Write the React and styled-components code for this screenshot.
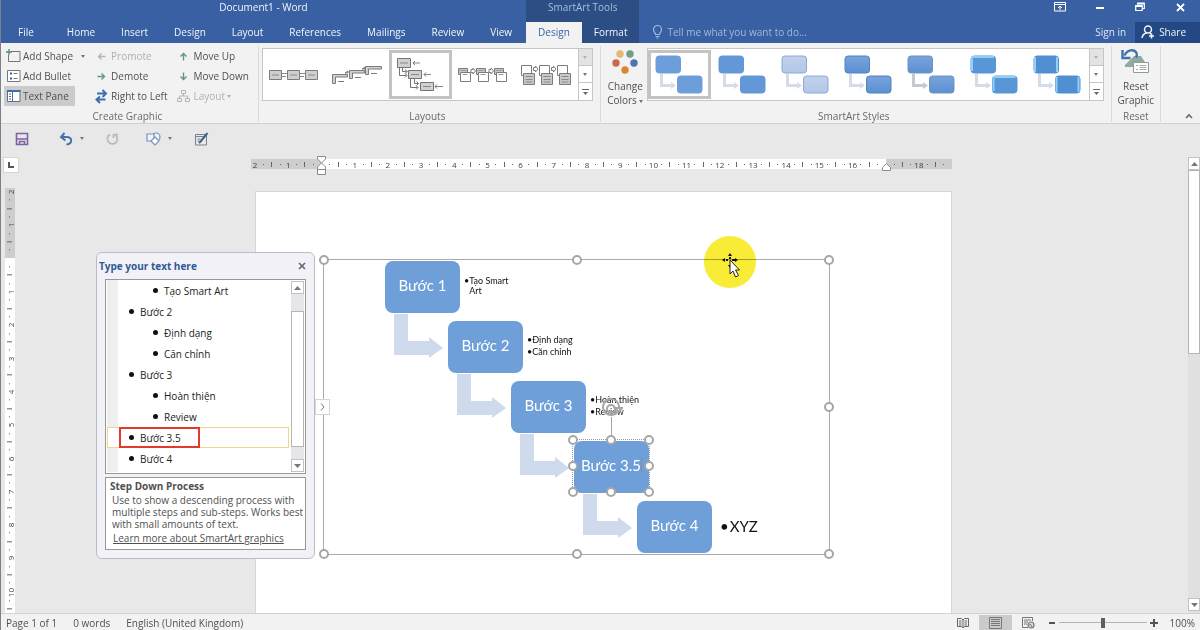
import React, { useState } from 'react';
import styled, { createGlobalStyle, css } from 'styled-components';

const colors = {
  brand: '#3860a2',
  brandDark: '#2c4e85',
  share: '#244883',
  ribbon: '#f2f2f2',
  canvas: '#e8e8e8',
  line: '#d2d2d2',
  text: '#505050',
  muted: '#b0b0b0',
  shape: '#6f9fd8',
  arrow: '#cfdaec',
};

const GlobalStyle = createGlobalStyle`
  * { box-sizing: border-box; }
  body {
    margin: 0;
    font-family: "Open Sans", "Noto Sans", sans-serif;
    font-size: 10px;
    color: ${colors.text};
  }
  button, input { font: inherit; color: inherit; }
  button { padding: 0; border: 0; background: none; cursor: pointer; white-space: nowrap; }
  svg { display: block; flex: none; }
`;

const Window = styled.div`
  display: flex;
  flex-direction: column;
  height: 100vh;
  min-height: 400px;
  overflow: hidden;
  border-left: 1px solid #7d8087;
  background: ${colors.canvas};
`;

/* ---------- title bar and tabs ---------- */

const Header = styled.header`
  display: flex;
  flex: none;
  background: ${colors.brand};
  color: #e9eef6;
`;

const HeaderPart = styled.div`
  display: flex;
  flex-direction: column;
  flex: ${props => (props.$grow ? 1 : 'none')};
  background: ${props => (props.$context ? colors.brandDark : 'transparent')};
`;

const TitleRow = styled.div`
  display: flex;
  align-items: center;
  justify-content: ${props => (props.$end ? 'flex-end' : 'center')};
  height: 22px;
  padding-bottom: 8px;
  color: ${props => (props.$context ? '#a9bddd' : '#f2f5fa')};
`;

const TabRow = styled.nav`
  display: flex;
  align-items: stretch;
  height: 21px;
`;

const Tab = styled.button`
  padding: 0 ${props => (props.$file ? '21px 2px 17px' : '12px 2px')};
  margin-right: ${props => (props.$file ? '0' : '2px')};
  background: ${props => (props.$active ? colors.ribbon : 'transparent')};
  color: ${props => (props.$active ? '#3c62a4' : '#f2f5fa')};
`;

const ContextTab = styled(Tab)`
  flex: 1;
  margin: 0;
`;

const WindowButton = styled.button`
  display: flex;
  align-items: center;
  justify-content: center;
  width: 40px;
  height: 14px;
  color: #fff;
`;

const TellMe = styled.label`
  display: flex;
  align-items: center;
  flex: 1;
  gap: 4px;
  padding: 0 0 2px 13px;
  color: #a4b8da;
`;

const TellMeInput = styled.input`
  flex: 1;
  min-width: 0;
  padding: 0;
  border: 0;
  outline: 0;
  background: none;
  &::placeholder { color: #a4b8da; opacity: 1; }
`;

const SignIn = styled.button`
  padding: 0 9px 2px;
  color: #e0e7f3;
`;

const Share = styled.button`
  display: flex;
  align-items: center;
  gap: 4px;
  padding: 0 14px 2px 6px;
  background: ${colors.share};
  color: #f2f5fa;
`;

/* ---------- ribbon ---------- */

const Ribbon = styled.section`
  display: flex;
  flex: none;
  height: 81px;
  background: ${colors.ribbon};
  border-bottom: 1px solid ${colors.line};
`;

const Group = styled.div`
  display: flex;
  flex-direction: column;
  justify-content: space-between;
  margin: 3px 0 1px;
  padding: ${props => props.$pad || '0 7px 0 3px'};
  border-right: 1px solid #dadada;
`;

const GroupBody = styled.div`
  display: flex;
  gap: ${props => props.$gap || '0'};
`;

const GroupName = styled.div`
  line-height: 12px;
  text-align: center;
  color: #6a6a6a;
`;

const CommandColumn = styled.div`
  display: flex;
  flex-direction: column;
  align-items: flex-start;
`;

const Command = styled.button`
  display: flex;
  align-items: center;
  gap: 2px;
  height: 20px;
  padding: 0 ${props => (props.$wide ? '6px' : '2px')} 0 2px;
  background: ${props => (props.$pressed ? '#cbcbcb' : 'transparent')};
  color: ${props => (props.disabled ? colors.muted : colors.text)};
`;

const Caret = styled.span`
  margin-left: ${props => props.$gap || '0'};
  border: 2px solid transparent;
  border-top: 3px solid ${props => (props.$faint ? colors.muted : '#777')};
  border-bottom: 0;
`;

const InlineCaret = styled(Caret)`
  display: inline-block;
  vertical-align: middle;
`;

const Gallery = styled.div`
  display: flex;
  height: 53px;
  margin-top: 2px;
  background: #fff;
  border: 1px solid #c6c6c6;
`;

const GalleryItem = styled.button`
  display: flex;
  align-items: center;
  justify-content: center;
  width: 63px;
  height: ${props => (props.$selected ? '49px' : 'auto')};
  margin-top: ${props => (props.$selected ? '1px' : '0')};
  border: 3px solid ${props => (props.$selected ? '#c3c3c3' : 'transparent')};
`;

const GalleryScroll = styled.div`
  display: grid;
  grid-template-rows: repeat(3, 1fr);
  width: 14px;
  border-left: 1px solid #c6c6c6;
`;

const ScrollStep = styled.button`
  display: flex;
  flex-direction: column;
  align-items: center;
  justify-content: center;
  gap: 2px;
  background: ${props => (props.disabled ? '#e3e3e3' : '#fff')};
  &:not(:last-child) { border-bottom: 1px solid #c6c6c6; }
`;

const BigButton = styled.button`
  display: flex;
  flex-direction: column;
  align-items: center;
  gap: 5px;
  width: ${props => props.$width};
  padding-top: ${props => props.$top || '4px'};
  line-height: 14px;
`;

const BigButtonCaption = styled.span`
  white-space: normal;
`;

const Collapse = styled.button`
  display: flex;
  align-items: flex-end;
  justify-content: flex-end;
  flex: 1;
  padding: 0 7px 4px 0;
`;

/* ---------- quick access ---------- */

const QuickAccess = styled.div`
  display: flex;
  align-items: center;
  flex: none;
  gap: 22px;
  height: 31px;
  padding: 0 0 2px 14px;
`;

const QuickButton = styled.button`
  display: flex;
  align-items: center;
  gap: 7px;
  width: ${props => props.$width || 'auto'};
`;

/* ---------- workspace ---------- */

const Workspace = styled.main`
  display: grid;
  grid-template-columns: 18px minmax(0, 1fr) 12px;
  grid-template-rows: 33px minmax(0, 1fr);
  flex: 1;
  min-height: 0;
`;

const TabStop = styled.button`
  display: flex;
  align-items: center;
  justify-content: center;
  width: 16px;
  height: 16px;
  margin: 2px 0 0 2px;
  background: #fff;
  border: 1px solid #d5d5d5;
`;

const RulerRow = styled.div`
  display: flex;
  justify-content: center;
  padding-right: 4px;
`;

const Ruler = styled.div`
  position: relative;
  display: flex;
  width: 701px;
  height: 10px;
  margin-top: 4px;
  padding-right: 4px;
  background: linear-gradient(to right, #cdcdcd 70px, #fff 70px, #fff 635px, #cdcdcd 635px);
  font-size: 8px;
  color: #3f3f3f;
`;

const VerticalRuler = styled.div`
  display: flex;
  flex-direction: column;
  width: 10px;
  min-height: 0;
  margin-left: 4px;
  overflow: hidden;
  background: linear-gradient(#cdcdcd 70px, #fff 70px);
  font-size: 8px;
  color: #3f3f3f;
`;

const Quarter = styled.span`
  display: flex;
  align-items: center;
  justify-content: center;
  flex: 1;
  min-width: 0;
  white-space: nowrap;
  ${props => props.$vertical && css`
    flex: 0 0 calc(100% / 51);
    writing-mode: vertical-rl;
    transform: rotate(180deg);
  `}
`;

const Tick = styled.i`
  width: ${props => (props.$vertical && props.$long ? '5px' : '1px')};
  height: ${props => (!props.$vertical && props.$long ? '5px' : '1px')};
  background: #666;
`;

const IndentMarker = styled.svg`
  position: absolute;
  top: ${props => props.$top};
  left: ${props => props.$left};
`;

const DocumentArea = styled.div`
  display: flex;
  justify-content: center;
  min-height: 0;
  padding-top: 3px;
`;

const Paper = styled.article`
  position: relative;
  width: 697px;
  background: #fff;
  border: 1px solid #d6d6d6;
  border-bottom: 0;
`;

const ScrollBar = styled.div`
  display: flex;
  flex-direction: column;
  grid-column: 3;
  grid-row: 1 / 3;
  margin-top: 2px;
  padding-bottom: 2px;
  background: #e0e0e0;
`;

const ScrollArrow = styled.button`
  display: flex;
  align-items: center;
  justify-content: center;
  flex: none;
  height: 13px;
  background: #fff;
  border: 1px solid #c2c2c2;
`;

const ScrollTrack = styled.div`
  flex: 1;
  padding-top: ${props => props.$top || '0'};
`;

const ScrollThumb = styled.div`
  height: ${props => props.$height};
  background: #fff;
  border: 1px solid #b5b5b5;
`;

/* ---------- SmartArt ---------- */

const ArtFrame = styled.div`
  position: absolute;
  top: 67px;
  left: 67px;
  width: 507px;
  height: 296px;
  border: 1px solid #a9a9a9;
  font-family: Lato, "Open Sans", sans-serif;
`;

const Step = styled.div`
  position: absolute;
  top: ${props => props.$y}px;
  left: ${props => props.$x}px;
  display: flex;
  align-items: center;
  justify-content: center;
  width: 75px;
  height: 52px;
  padding-bottom: 4px;
  border-radius: 8px;
  background: ${colors.shape};
  color: #fff;
  font-size: 15px;
  white-space: nowrap;
`;

const StepArrow = styled.svg`
  position: absolute;
  top: ${props => props.$y}px;
  left: ${props => props.$x}px;
`;

const Notes = styled.ul`
  position: absolute;
  top: ${props => props.$y}px;
  left: ${props => props.$x}px;
  display: flex;
  flex-direction: column;
  justify-content: center;
  gap: ${props => (props.$large ? '0' : '2px')};
  width: 52px;
  height: 52px;
  margin: 0;
  padding: 0 0 2px;
  list-style: none;
  color: #111;
  font-size: ${props => (props.$large ? '15px' : '9px')};
  line-height: ${props => (props.$large ? '18px' : '10px')};
`;

const Note = styled.li`
  display: flex;
  gap: ${props => (props.$large ? '1px' : '0')};
  white-space: ${props => (props.$wrap ? 'normal' : 'nowrap')};
`;

const Selection = styled.div`
  position: absolute;
  top: 179px;
  left: 248px;
  width: 78px;
  height: 54px;
  border: 1px dotted #8d9bb0;
`;

const Handle = styled.span`
  position: absolute;
  top: ${props => props.$top};
  left: ${props => props.$left};
  width: 10px;
  height: 10px;
  margin: -5px 0 0 -5px;
  border: 2px solid #a6a6a6;
  border-radius: 50%;
  background: #fff;
`;

const TextCursor = styled.i`
  width: 1px;
  height: 16px;
  background: #7f8ea5;
`;

const RotateHandle = styled.svg`
  position: absolute;
  top: -42px;
  left: 28px;
`;

const PaneToggle = styled.button`
  position: absolute;
  top: 139px;
  left: -9px;
  display: flex;
  align-items: center;
  justify-content: center;
  width: 15px;
  height: 16px;
  background: #fff;
  border: 1px solid #d5d5d5;
`;

const Spotlight = styled.span`
  position: absolute;
  top: -24px;
  left: 380px;
  width: 52px;
  height: 52px;
  border-radius: 50%;
  background: #f8ec36;
  mix-blend-mode: multiply;
`;

const Pointer = styled.svg`
  position: absolute;
  top: -7px;
  left: 398px;
`;

/* ---------- text pane ---------- */

const TextPane = styled.aside`
  position: absolute;
  top: 60px;
  left: -160px;
  width: 219px;
  padding: 0 8px 8px;
  border: 1px solid #bcbcc6;
  border-radius: 6px;
  background: #f1f1f7;
`;

const PaneHeader = styled.header`
  display: flex;
  align-items: center;
  justify-content: space-between;
  height: 26px;
  margin-left: -6px;
`;

const PaneTitle = styled.h2`
  margin: 0;
  font-size: 10px;
  font-weight: 700;
  color: #2f5a96;
`;

const PaneList = styled.div`
  display: flex;
  height: 195px;
  padding: 0 1px 1px;
  border: 1px solid #989898;
  background: #fff;
`;

const Outline = styled.ul`
  flex: 1;
  min-width: 0;
  margin: 0;
  padding: 0;
  list-style: none;
  background: linear-gradient(to right, #efefef 11px, #fff 11px);
  color: #222;
`;

const OutlineItem = styled.li`
  display: flex;
  align-items: center;
  height: 21px;
  padding-left: ${props => (props.$level === 2 ? '36px' : '12px')};
  ${props => props.$current && css`
    padding-left: 11px;
    background: #fff;
    border: 1px solid #f3d48a;
  `}
`;

const OutlineText = styled.span`
  display: flex;
  align-items: center;
  gap: 6px;
  height: 21px;
  padding: 0 17px 0 10px;
  ${props => props.$marked && css`
    padding: 0 17px 0 8px;
    border: 2px solid #e23a2c;
  `}
`;

const Dot = styled.i`
  width: 5px;
  height: 5px;
  border-radius: 50%;
  background: #111;
`;

const PaneScroll = styled.div`
  display: flex;
  flex-direction: column;
  width: 13px;
  margin: 1px 0 0 2px;
  background: #e6e6ea;
`;

const PaneInfo = styled.section`
  height: 73px;
  margin-top: 3px;
  padding: 2px 4px 0;
  border: 1px solid #989898;
  background: #fff;
  line-height: 12px;
`;

const InfoTitle = styled.h3`
  margin: 0 0 2px;
  font-size: 10px;
  font-weight: 700;
  line-height: 12px;
`;

const InfoText = styled.p`
  margin: 0 -4px 2px 2px;
`;

const InfoLink = styled.a`
  margin-left: 3px;
  color: ${colors.text};
`;

/* ---------- status bar ---------- */

const StatusBar = styled.footer`
  display: flex;
  align-items: center;
  flex: none;
  height: 17px;
  padding: 1px 0 0 5px;
  background: ${colors.ribbon};
  border-top: 1px solid ${colors.line};
`;

const StatusItem = styled.span`
  margin-right: 16px;
`;

const ViewButton = styled.button`
  display: flex;
  align-items: center;
  justify-content: center;
  width: 33px;
  height: 16px;
  background: ${props => (props.$active ? '#cbcbcb' : 'transparent')};
`;

const Views = styled.div`
  display: flex;
  margin-left: auto;
`;

const ZoomStep = styled.button`
  display: flex;
  align-items: center;
  justify-content: center;
  width: 14px;
  height: 14px;
`;

const ZoomRange = styled.input`
  width: 88px;
  height: 12px;
  margin: 0;
  appearance: none;
  background: linear-gradient(#b4b4b4, #b4b4b4) center / 100% 1px no-repeat;
  &::-webkit-slider-thumb {
    appearance: none;
    width: 4px;
    height: 10px;
    background: #5f5f5f;
  }
`;

const ZoomValue = styled.output`
  width: 39px;
  padding-right: 5px;
  text-align: right;
`;

/* ---------- icons ---------- */

const Arrow = ({ dir, color = '#5f9780' }) => (
  <svg width="15" height="11" viewBox="-2 0 15 11" fill="none" stroke={color} strokeWidth="1.4">
    <g transform={`rotate(${{ right: 0, down: 90, left: 180, up: 270 }[dir]} 5.5 5.5)`}>
      <path d="M1.5 5.5h7M5.500 2.500l3 3-3 3" />
    </g>
  </svg>
);

const AddShapeIcon = () => (
  <svg width="15" height="14" viewBox="0 0 15 14" fill="none">
    <path d="M5 2.5h9v10H2.500V6" stroke="#777" />
    <path d="M3 0v6M0 3h6" stroke="#4f8a6d" strokeWidth="1.300" />
  </svg>
);

const AddBulletIcon = () => (
  <svg width="15" height="14" viewBox="0 0 15 14" fill="none">
    <path d="M1.500 1.500h12.500v11H1.500z" fill="#fff" stroke="#777" />
    <path d="M4 4.500h2M4 9.500h2" stroke="#35639f" strokeWidth="2" />
    <path d="M7.500 4.500h4M7.500 9.500h4" stroke="#777" />
  </svg>
);

const TextPaneIcon = () => (
  <svg width="15" height="14" viewBox="0 0 15 14" fill="none">
    <path d="M1.500 1.500h12.500v11H1.500z" fill="#fff" stroke="#5b6f8c" />
    <path d="M1 2h13.500" stroke="#3b6cad" strokeWidth="2" />
    <path d="M6.500 3v9" stroke="#5b6f8c" />
    <path d="M3 5h2M3 7.500h2M3 10h2" stroke="#3b6cad" />
  </svg>
);

const SwapIcon = () => (
  <svg width="15" height="15" viewBox="0 0 15 15" fill="none" stroke="#3e6db0" strokeWidth="2">
    <path d="M3 4.500h9M8.500 1l3.500 3.500L8.500 8" />
    <path d="M11.500 10.500H3M6 7.500l-3.500 3 3.500 3.500" />
  </svg>
);

const OrgIcon = () => (
  <svg width="15" height="14" viewBox="0 0 15 14" fill="none" stroke="#b5b5b5">
    <path d="M5.500 1.500h4v3h-4zM1.500 9.500h4v3h-4zM9.500 9.500h4v3h-4zM7.500 4.500V7M3.500 9.500V7h8v2.500" />
  </svg>
);

const LayoutBasic = () => (
  <svg width="50" height="14" viewBox="0 0 50 14" fill="#cfcfcf" stroke="#7c7c7c">
    <path d="M.5 2.500h12v9H.5zM18.500 2.500h12v9h-12zM36.500 2.500h12v9h-12z" />
    <path d="M3 7h7M21 7h7M39 7h7M13 5.500h5M13 8.500h4M31 5.500h5M31 8.500h4" stroke="#888" />
  </svg>
);

const LayoutRise = () => (
  <svg width="50" height="20" viewBox="0 0 50 20" fill="#d0d0d0" stroke="#7c7c7c">
    <path d="M.5 18.500v-9h15v2.500h-12v6.500zM17.500 13.500v-8h15v2.500h-12v5.500zM33.500 9.500v-8h16v2.500h-13v5.500z" />
    <path d="M6 16.500h6M23 12.500h6M39 8.500h6M13 8l3-2v2zM30 4l3-2v2z" />
  </svg>
);

const LayoutStepDown = () => (
  <svg width="48" height="36" viewBox="0 0 48 36" fill="none" stroke="#747474">
    <path d="M1.500 1.500h13v9h-13zM12.500 13.500h13v8h-13zM24.500 25.500h13v8h-13z" fill="#d0d0d0" />
    <path d="M4 6h8M15 17.500h8M27 29.500h8M17 6h7M28 17.500h7M39 29.500h8" stroke="#888" />
    <path d="M3.500 10.500v8h7M6.500 10.500v4h4M14.500 21.500v9h7M18.500 21.500v5h4" />
    <path d="M9 12.500l2.500 2L9 16.500M9 16.500l2 2-2 2M20 28.500l2 2-2 2M20.500 24.500l2 2-2 2M19 4l-2 2 2 2M30 15.500l-2 2 2 2M41 27.500l-2 2 2 2" />
  </svg>
);

const LayoutAccent = () => (
  <svg width="50" height="16" viewBox="0 0 50 16" stroke="#7c7c7c">
    {[0, 18, 36].map(x => (
      <g key={x} transform={`translate(${x} 0)`}>
        <path d="M.5 1.500h9v6h-9z" fill="#c8c8c8" />
        <path d="M2.500 5.500h10v9h-10z" fill="#fff" />
        <path d="M1.500 3.500h7M4.500 7.500h5" stroke="#999" />
        {x < 36 && <path d="M15 2.500h-2v3h2v1.500l2.500-3L15 1z" fill="#fff" />}
      </g>
    ))}
  </svg>
);

const LayoutProcess = () => (
  <svg width="51" height="22" viewBox="0 0 51 22" stroke="#7c7c7c">
    {[0, 18, 36].map(x => (
      <g key={x} transform={`translate(${x} 0)`}>
        <path d="M.5 1.500h10v10H.5z" fill="#fff" />
        <path d="M2.500 9.500h11v11h-11z" fill="#c8c8c8" />
        <path d="M4.500 12.500h7M4.500 15.500h7M4.500 18h7" stroke="#8a8a8a" />
        {x < 36 && <path d="M14.500 3.500h-2v3h2V8l2.500-3-2.500-3z" fill="#fff" />}
      </g>
    ))}
  </svg>
);

const layouts = [LayoutBasic, LayoutRise, LayoutStepDown, LayoutAccent, LayoutProcess];

const styles = [
  { id: 'simple', fill: '#6c9edb' },
  { id: 'white', fill: '#6497d7' },
  { id: 'subtle', fill: '#b3c7e8', stroke: '#8ea9d4' },
  { id: 'moderate', fill: '#5b90d2', stroke: '#4f82c4' },
  { id: 'intense', fill: '#5b90d2', stroke: '#6f93c0', arrow: '#c5c9d2' },
  { id: 'polished', fill: '#5996d8', shine: 'top' },
  { id: 'inset', fill: '#4f8fd2', shine: 'side' },
];

const StyleThumb = ({ id, fill, stroke = fill, arrow = '#d5dbea', shine }) => (
  <svg width="48" height="42" viewBox="0 0 48 42">
    <defs>
      <linearGradient id={`fill-${id}`} x1="0" y1="0" x2="0" y2="1">
        <stop offset="0" stopColor={fill} stopOpacity={stroke === fill ? 1 : 0.82} />
        <stop offset="1" stopColor={fill} />
      </linearGradient>
    </defs>
    <path d="M6.500 20v11.500h11" fill="none" stroke={arrow} strokeWidth="3" />
    <path d="M16 28l5 3.500-5 3.500z" fill={arrow} />
    {[[1, 2], [22.5, 22]].map(([x, y]) => (
      <g key={x}>
        <rect x={x} y={y} width="24.500" height="17" rx="3" fill={`url(#fill-${id})`} stroke={stroke} />
        {shine === 'top' && <path d={`M${x + 1} ${y + 1}h22M${x + 1} ${y + 1}v14`} fill="none" stroke="#8fd0f5" strokeWidth="2" />}
        {shine === 'side' && <path d={`M${x + 1} ${y + 1}v15M${x + 23} ${y + 1}v15`} stroke="#8fd0f5" strokeWidth="2" />}
      </g>
    ))}
  </svg>
);

const ColorsIcon = () => (
  <svg width="26" height="24" viewBox="0 0 26 24">
    <circle cx="8" cy="4" r="3.700" fill="#e8b670" />
    <circle cx="18" cy="4" r="3.700" fill="#6f9f8b" />
    <circle cx="4" cy="13" r="3.700" fill="#cc6552" />
    <circle cx="22" cy="13" r="3.700" fill="#4e73ad" />
    <circle cx="13" cy="20" r="3.700" fill="#dd8531" />
  </svg>
);

const ResetIcon = () => (
  <svg width="30" height="26" viewBox="0 0 30 26" fill="none">
    <path d="M4 17 13 8h7l7 11H4z" fill="#8caa9d" />
    <path d="M3.500 7.500C6 1.500 13 .5 15.500 5c1 2 .5 3-.5 4.500" stroke="#4371ac" strokeWidth="2.400" />
    <path d="M1.500 2v8h8" stroke="#4371ac" strokeWidth="2.400" />
    <path d="M12.500 14.500h15v10h-15z" fill="#fff" stroke="#8f9c98" />
    <path d="M15 17.500h2M15 21.500h2M18.500 17.500h7M18.500 19.500h7M18.500 21.500h7" stroke="#a2adaa" />
  </svg>
);

const SaveIcon = () => (
  <svg width="14" height="14" viewBox="0 0 14 14" fill="none" stroke="#7e62a5" strokeWidth="1.600">
    <path d="M1.500 1.500h11v11h-11zM2 7h10M4.500 12.500v-3h5v3" />
  </svg>
);

const UndoIcon = () => (
  <svg width="14" height="14" viewBox="0 0 14 14" fill="none" stroke="#4470ac" strokeWidth="2">
    <path d="M5.500 1 2 5l4.500 3.500M2 5h5.500C14 5 13.500 12 7.500 12.500" />
  </svg>
);

const RedoIcon = () => (
  <svg width="13" height="14" viewBox="0 0 13 14" fill="none" stroke="#b9b9b9" strokeWidth="1.700">
    <path d="M4 2.500a5 5 0 1 0 5.500.5M7.500 6V2.500H12" />
  </svg>
);

const ShapesIcon = () => (
  <svg width="15" height="14" viewBox="0 0 15 14" fill="#eef2f8" stroke="#7794bd" strokeWidth="1.200">
    <circle cx="10" cy="5" r="4" />
    <path d="M1 2h7v7H1z" />
    <path d="m9 5 4 4-4 4-4-4z" fill="#fff" />
  </svg>
);

const EditIcon = () => (
  <svg width="15" height="14" viewBox="0 0 15 14" fill="none" stroke="#77828e">
    <path d="M1.500 2.500h11v10.500h-11zM1.500 4.500h11M3.500 7h3M3.500 9h2" />
    <path d="M13.500 1 7 9l-2 2" stroke="#3f658f" strokeWidth="2" />
  </svg>
);

const BulbIcon = () => (
  <svg width="11" height="14" viewBox="0 0 11 14" fill="none" stroke="currentColor" strokeWidth="1.200">
    <path d="M3.500 9.500c0-2-2-2.500-2-5a4 4 0 0 1 8 0c0 2.500-2 3-2 5zM3.500 11.500h4M4.500 13h2" />
  </svg>
);

const PersonIcon = () => (
  <svg width="14" height="14" viewBox="0 0 14 14" fill="none" stroke="currentColor" strokeWidth="1.500">
    <circle cx="7" cy="4.500" r="3.500" />
    <path d="M1 13c.5-3 2-4.500 4.500-5M9 8l2 2M10.500 8.500v5M8 11h5" />
  </svg>
);

const StepArrowShape = ({ x, y }) => (
  <StepArrow $x={x} $y={y} width="50" height="45" viewBox="0 0 50 45" fill={colors.arrow}>
    <path d="M0 0h14v27h21v-4l14 11-14 10v-3H0z" />
  </StepArrow>
);

const Up = () => (
  <svg width="7" height="4" viewBox="0 0 7 4" fill="#777"><path d="M0 4 3.500 0 7 4z" /></svg>
);

const Down = () => (
  <svg width="7" height="4" viewBox="0 0 7 4" fill="#777"><path d="M0 0h7L3.500 4z" /></svg>
);

/* ---------- data ---------- */

const tabs = ['File', 'Home', 'Insert', 'Design', 'Layout', 'References', 'Mailings', 'Review', 'View'];

const outline = [
  { text: 'Tạo Smart Art', level: 2 },
  { text: 'Bước 2', level: 1 },
  { text: 'Định dạng', level: 2 },
  { text: 'Căn chỉnh', level: 2 },
  { text: 'Bước 3', level: 1 },
  { text: 'Hoàn thiện', level: 2 },
  { text: 'Review', level: 2 },
  { text: 'Bước 3.5', level: 1, current: true },
  { text: 'Bước 4', level: 1 },
];

const steps = [
  { text: 'Bước 1', notes: ['Tạo Smart Art'], wrap: true },
  { text: 'Bước 2', notes: ['Định dạng', 'Căn chỉnh'] },
  { text: 'Bước 3', notes: ['Hoàn thiện', 'Review'] },
  { text: 'Bước 3.5', notes: [], editing: true },
  { text: 'Bước 4', notes: ['XYZ'], large: true },
];

const frameHandles = [
  ['0%', '0%'], ['0%', '50%'], ['0%', '100%'], ['50%', '100%'],
  ['100%', '0%'], ['100%', '50%'], ['100%', '100%'],
];

const RulerMarks = ({ count, hidden = [], vertical }) =>
  Array.from({ length: count }, (_, i) => {
    const unit = i / 4 - 2;
    if (i % 4 === 0) {
      return (
        <Quarter key={i} $vertical={vertical}>
          {hidden.includes(unit) ? '' : Math.abs(unit)}
        </Quarter>
      );
    }
    return (
      <Quarter key={i} $vertical={vertical}>
        <Tick $long={i % 4 === 2} $vertical={vertical} />
      </Quarter>
    );
  });

const GallerySteps = () => (
  <GalleryScroll>
    <ScrollStep disabled aria-label="Previous row"><Caret $faint /></ScrollStep>
    <ScrollStep aria-label="Next row"><Caret /></ScrollStep>
    <ScrollStep aria-label="More">
      <svg width="7" height="6" viewBox="0 0 7 6" fill="#666"><path d="M0 0h7v1H0zM1 3h5L3.500 6z" /></svg>
    </ScrollStep>
  </GalleryScroll>
);

const TitleBar = () => (
  <Header>
    <HeaderPart>
      <TitleRow>Document1 - Word</TitleRow>
      <TabRow>
        {tabs.map(name => <Tab key={name} $file={name === 'File'}>{name}</Tab>)}
      </TabRow>
    </HeaderPart>
    <HeaderPart $context>
      <TitleRow $context>SmartArt Tools</TitleRow>
      <TabRow>
        <ContextTab $active>Design</ContextTab>
        <ContextTab>Format</ContextTab>
      </TabRow>
    </HeaderPart>
    <HeaderPart $grow>
      <TitleRow $end>
        <WindowButton aria-label="Ribbon display options">
          <svg width="12" height="10" viewBox="0 0 12 10" fill="none" stroke="currentColor">
            <path d="M.5.5h11v8.500H.5zM.5 2.500h11M6 8V4M4 6l2-2 2 2" />
          </svg>
        </WindowButton>
        <WindowButton aria-label="Minimize">
          <svg width="8" height="8" viewBox="0 0 8 8" fill="currentColor"><path d="M0 4h8v2H0z" /></svg>
        </WindowButton>
        <WindowButton aria-label="Restore">
          <svg width="10" height="10" viewBox="0 0 10 10" fill="none" stroke="currentColor" strokeWidth="1.200">
            <path d="M.7 3.500h6.500v5H.7zM.7 4.500h6.500M2.700 3V1h6.600v5.500H7.500M2.700 2h6.600" />
          </svg>
        </WindowButton>
        <WindowButton aria-label="Close">
          <svg width="9" height="9" viewBox="0 0 9 9" stroke="currentColor" strokeWidth="1.800">
            <path d="m1 1 7 7M8 1 1 8" />
          </svg>
        </WindowButton>
      </TitleRow>
      <TabRow>
        <TellMe>
          <BulbIcon />
          <TellMeInput aria-label="Tell me" placeholder="Tell me what you want to do..." />
        </TellMe>
        <SignIn>Sign in</SignIn>
        <Share><PersonIcon />Share</Share>
      </TabRow>
    </HeaderPart>
  </Header>
);

const RibbonBar = () => (
  <Ribbon>
    <Group>
      <GroupBody $gap="5px">
        <CommandColumn>
          <Command><AddShapeIcon />Add Shape<Caret $gap="6px" /></Command>
          <Command><AddBulletIcon />Add Bullet</Command>
          <Command $pressed $wide><TextPaneIcon />Text Pane</Command>
        </CommandColumn>
        <CommandColumn>
          <Command disabled><Arrow dir="left" color="#b5b5b5" />Promote</Command>
          <Command><Arrow dir="right" />Demote</Command>
          <Command><SwapIcon />Right to Left</Command>
        </CommandColumn>
        <CommandColumn>
          <Command><Arrow dir="up" />Move Up</Command>
          <Command><Arrow dir="down" />Move Down</Command>
          <Command disabled><OrgIcon />Layout<Caret $faint /></Command>
        </CommandColumn>
      </GroupBody>
      <GroupName>Create Graphic</GroupName>
    </Group>

    <Group>
      <Gallery>
        {layouts.map((Thumb, i) => (
          <GalleryItem key={i} $selected={i === 2} aria-label={`Layout ${i + 1}`}><Thumb /></GalleryItem>
        ))}
        <GallerySteps />
      </Gallery>
      <GroupName>Layouts</GroupName>
    </Group>

    <Group>
      <GroupBody>
        <BigButton $width="43px">
          <ColorsIcon />
          <BigButtonCaption>Change Colors <InlineCaret /></BigButtonCaption>
        </BigButton>
        <Gallery>
          {styles.map((item, i) => (
            <GalleryItem key={item.id} $selected={i === 0} aria-label={item.id}><StyleThumb {...item} /></GalleryItem>
          ))}
          <GallerySteps />
        </Gallery>
      </GroupBody>
      <GroupName>SmartArt Styles</GroupName>
    </Group>

    <Group $pad="0 4px">
      <BigButton $width="40px" $top="2px">
        <ResetIcon />
        <BigButtonCaption>Reset Graphic</BigButtonCaption>
      </BigButton>
      <GroupName>Reset</GroupName>
    </Group>

    <Collapse aria-label="Collapse the ribbon">
      <svg width="8" height="6" viewBox="0 0 8 6" fill="none" stroke="#666" strokeWidth="1.600"><path d="M1 5l3-3 3 3" /></svg>
    </Collapse>
  </Ribbon>
);

const SmartArt = () => (
  <ArtFrame>
    {steps.map((step, i) => {
      const x = 61 + i * 63;
      const y = 1 + i * 60;
      return (
        <React.Fragment key={step.text}>
          {i < steps.length - 1 && <StepArrowShape x={x + 9} y={y + 53} />}
          <Step $x={x} $y={y}>{step.text}{step.editing && <TextCursor />}</Step>
          {step.notes.length > 0 && (
            <Notes $x={x + (step.large ? 83 : 79)} $y={y} $large={step.large}>
              {step.notes.map(note => (
                <Note key={note} $wrap={step.wrap} $large={step.large}><span>•</span><span>{note}</span></Note>
              ))}
            </Notes>
          )}
        </React.Fragment>
      );
    })}

    <Selection>
      {['0%', '50%', '100%'].map(top =>
        ['0%', '50%', '100%'].filter(left => !(top === '50%' && left === '50%')).map(left => (
          <Handle key={top + left} $top={top} $left={left} />
        ))
      )}
      <RotateHandle width="22" height="37" viewBox="0 0 22 37" fill="none" stroke="#a6a6a6" strokeWidth="2">
        <path d="M10.500 19v18" strokeWidth="1" />
        <circle cx="10" cy="11" r="4" />
        <path d="M17 13a8 8 0 1 1 1-3M14 10h7l-3.500 4z" />
      </RotateHandle>
    </Selection>

    <Spotlight />
    {frameHandles.map(([top, left]) => <Handle key={top + left} $top={top} $left={left} />)}
    <PaneToggle aria-label="Toggle text pane">
      <svg width="5" height="8" viewBox="0 0 5 8" fill="none" stroke="#777"><path d="m1 .5 3 3.500-3 3.500" /></svg>
    </PaneToggle>
    <Pointer width="20" height="28" viewBox="0 0 20 28">
      <path d="M8 0l2 3H6zM0 7l3-2v4zM16 7l-3-2v4zM7 4h2v2H7zM4 6h2v2H4zM10 6h3v2h-3zM6 12h2v3z" fill="#111" />
      <path d="M8 7v14l3-3 2.500 6 3-1.500-3-5.500h4z" fill="#fff" stroke="#222" />
    </Pointer>
  </ArtFrame>
);

const SmartArtTextPane = () => (
  <TextPane>
    <PaneHeader>
      <PaneTitle>Type your text here</PaneTitle>
      <button aria-label="Close text pane">
        <svg width="8" height="8" viewBox="0 0 8 8" stroke="#666" strokeWidth="1.600"><path d="m1 1 6 6M7 1 1 7" /></svg>
      </button>
    </PaneHeader>
    <PaneList>
      <Outline>
        {outline.map(item => (
          <OutlineItem key={item.text} $level={item.level} $current={item.current}>
            <OutlineText $marked={item.current}><Dot />{item.text}</OutlineText>
          </OutlineItem>
        ))}
      </Outline>
      <PaneScroll>
        <ScrollArrow aria-label="Scroll up"><Up /></ScrollArrow>
        <ScrollTrack $top="17px"><ScrollThumb $height="136px" /></ScrollTrack>
        <ScrollArrow aria-label="Scroll down"><Down /></ScrollArrow>
      </PaneScroll>
    </PaneList>
    <PaneInfo>
      <InfoTitle>Step Down Process</InfoTitle>
      <InfoText>Use to show a descending process with multiple steps and sub-steps. Works best with small amounts of text.</InfoText>
      <InfoLink href="#learn">Learn more about SmartArt graphics</InfoLink>
    </PaneInfo>
  </TextPane>
);

export default function App() {
  const [zoom, setZoom] = useState(100);

  return (
    <>
      <GlobalStyle />
      <Window>
        <TitleBar />
        <RibbonBar />

        <QuickAccess>
          <QuickButton $width="22px" aria-label="Save"><SaveIcon /></QuickButton>
          <QuickButton aria-label="Undo"><UndoIcon /><Caret /></QuickButton>
          <QuickButton $width="18px" aria-label="Redo"><RedoIcon /></QuickButton>
          <QuickButton aria-label="Shapes"><ShapesIcon /><Caret /></QuickButton>
          <QuickButton aria-label="Edit"><EditIcon /></QuickButton>
        </QuickAccess>

        <Workspace>
          <TabStop aria-label="Tab stop">
            <svg width="6" height="6" viewBox="0 0 6 6" fill="none" stroke="#555" strokeWidth="2"><path d="M1 0v5h5" /></svg>
          </TabStop>
          <RulerRow>
            <Ruler>
              <RulerMarks count={84} hidden={[0, 17]} />
              <IndentMarker $left="66px" $top="-3px" width="9" height="20" viewBox="0 0 9 20" fill="#fff" stroke="#8a8a8a">
                <path d="M.5.500h8V3l-4 4-4-4zM4.500 7l4 4v2.500h-8V11zM.5 13.500h8v5h-8z" />
              </IndentMarker>
              <IndentMarker $left="631px" $top="4px" width="9" height="8" viewBox="0 0 9 8" fill="#fff" stroke="#8a8a8a">
                <path d="M4.500.500l4 4v3h-8v-3z" />
              </IndentMarker>
            </Ruler>
          </RulerRow>
          <VerticalRuler>
            <RulerMarks count={51} hidden={[0]} vertical />
          </VerticalRuler>
          <DocumentArea>
            <Paper>
              <SmartArt />
              <SmartArtTextPane />
            </Paper>
          </DocumentArea>
          <ScrollBar>
            <ScrollArrow aria-label="Scroll up"><Up /></ScrollArrow>
            <ScrollTrack><ScrollThumb $height="184px" /></ScrollTrack>
            <ScrollArrow aria-label="Scroll down"><Down /></ScrollArrow>
          </ScrollBar>
        </Workspace>

        <StatusBar>
          <StatusItem>Page 1 of 1</StatusItem>
          <StatusItem>0 words</StatusItem>
          <StatusItem>English (United Kingdom)</StatusItem>
          <Views>
            <ViewButton aria-label="Read mode">
              <svg width="12" height="12" viewBox="0 0 12 12" fill="none" stroke="#666">
                <path d="M.5 1.500h4L6 3l1.500-1.500h4v8h-4L6 11 4.500 9.500h-4zM6 3v8M2 4h2.500M2 6h2.500M2 8h2.500M7.500 4H10M7.500 6H10M7.500 8H10" />
              </svg>
            </ViewButton>
            <ViewButton $active aria-label="Print layout">
              <svg width="13" height="12" viewBox="0 0 13 12" fill="none" stroke="#777">
                <path d="M.5.500h12v11H.5zM2 2.500h9M2 4.500h9M2 6.500h9M2 8.500h9" />
              </svg>
            </ViewButton>
            <ViewButton aria-label="Web layout">
              <svg width="13" height="12" viewBox="0 0 13 12" fill="none" stroke="#777">
                <path d="M6 10.500H.5V.5h10V4M2 3h7M2 5h4M2 7h3" />
                <circle cx="9" cy="8" r="3" fill="#ddd" strokeWidth="1.200" />
                <path d="M7 7l2 1 1 2" />
              </svg>
            </ViewButton>
          </Views>
          <ZoomStep aria-label="Zoom out" onClick={() => setZoom(zoom - 10)}>
            <svg width="6" height="2" viewBox="0 0 6 2" fill="#555"><path d="M0 0h6v2H0z" /></svg>
          </ZoomStep>
          <ZoomRange type="range" min="0" max="200" value={zoom} aria-label="Zoom" onChange={e => setZoom(Number(e.target.value))} />
          <ZoomStep aria-label="Zoom in" onClick={() => setZoom(zoom + 10)}>
            <svg width="8" height="8" viewBox="0 0 8 8" fill="#555"><path d="M3 0h2v3h3v2H5v3H3V5H0V3h3z" /></svg>
          </ZoomStep>
          <ZoomValue>{zoom}%</ZoomValue>
        </StatusBar>
      </Window>
    </>
  );
}
